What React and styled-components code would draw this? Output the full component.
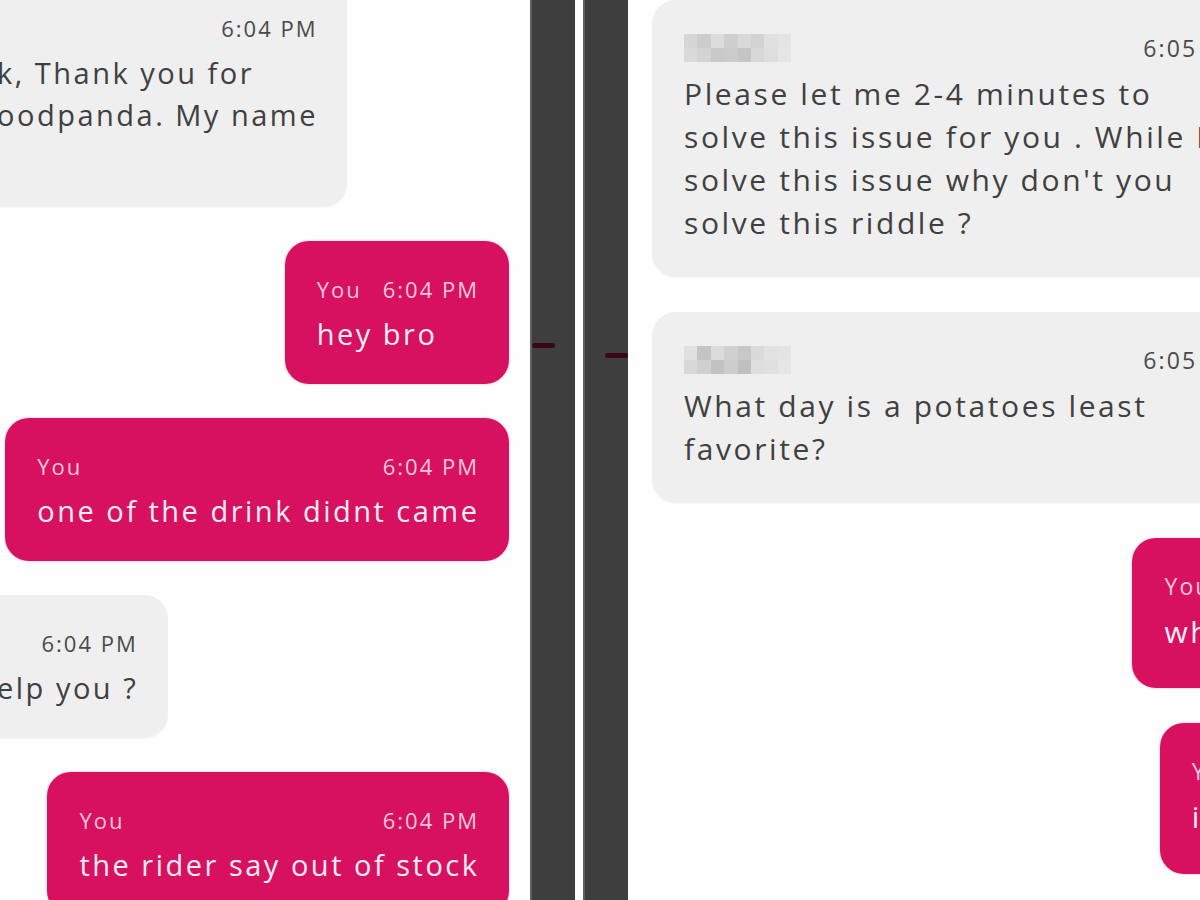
import React from "react";
import styled, { createGlobalStyle } from "styled-components";

const GlobalStyle = createGlobalStyle`
  html, body {
    margin: 0;
    padding: 0;
    background: #ffffff;
  }
  body {
    font-family: "Open Sans", "Noto Sans", sans-serif;
  }
`;

const Page = styled.div`
  display: flex;
  width: 1200px;
  height: 900px;
  overflow: hidden;
  background: #ffffff;
`;

const Panel = styled.div`
  flex: ${({ $width }) => ($width ? "none" : 1)};
  width: ${({ $width }) => ($width ? `${$width}px` : "auto")};
  overflow: hidden;
  background: #fefefe;
`;

const Column = styled.div`
  display: flex;
  flex-direction: column;
  gap: ${({ $gap }) => $gap}px;
  box-sizing: border-box;
  width: ${({ $width }) => $width}px;
  margin-left: ${({ $shift }) => $shift}px;
  margin-top: ${({ $top }) => $top}px;
  padding: ${({ $pad }) => $pad};
`;

const Bezel = styled.div`
  position: relative;
  flex: none;
  width: 43px;
  background: #3e3e3e;
  border-left: 2px solid #606060;
`;

const BezelGap = styled.div`
  flex: none;
  width: 8px;
  background: #ffffff;
`;

const Notch = styled.span`
  position: absolute;
  top: ${({ $top }) => $top}px;
  ${({ $right }) => ($right ? "right: 0;" : "left: 0;")}
  width: 23px;
  height: 5px;
  border-radius: 3px;
  background: #3a0716;
`;

const Bubble = styled.div`
  align-self: ${({ $out }) => ($out ? "flex-end" : "flex-start")};
  display: flex;
  flex-direction: column;
  gap: 9px;
  box-sizing: border-box;
  width: ${({ $w }) => ($w ? `${$w}px` : "auto")};
  padding: 33px 32px ${({ $bottom }) => $bottom}px;
  border-radius: 24px;
  background: ${({ $out }) => ($out ? "#d7105f" : "#efefef")};
  color: ${({ $out }) => ($out ? "#fdeef4" : "#404040")};
  box-shadow: ${({ $out }) =>
    $out ? "0 0 3px rgba(215, 16, 95, 0.25)" : "0 1px 2px rgba(0, 0, 0, 0.04)"};
`;

const Header = styled.div`
  display: flex;
  justify-content: space-between;
  align-items: center;
  gap: 21px;
  height: 30px;
  font-size: ${({ $big }) => ($big ? 23 : 22)}px;
  line-height: 30px;
  letter-spacing: ${({ $big }) => ($big ? 2.1 : 2)}px;
  white-space: nowrap;
`;

const Sender = styled.span`
  color: ${({ $out }) => ($out ? "#f7c8db" : "#555555")};
`;

const Time = styled.span`
  margin-right: -2px;
  color: ${({ $out }) => ($out ? "#f7c8db" : "#4a4a4a")};
`;

const Body = styled.div`
  font-size: ${({ $big }) => ($big ? 30 : 29)}px;
  line-height: ${({ $lh }) => $lh}px;
  letter-spacing: ${({ $big }) => ($big ? 2.6 : 2.5)}px;
  white-space: nowrap;
  margin-left: ${({ $indent }) => ($indent ? `${$indent}px` : 0)};
  margin-right: -2.5px;
`;

const Line = styled.div`
  min-height: 1em;
`;

const Blur = styled.div`
  display: grid;
  grid-template-columns: repeat(8, 1fr);
  grid-template-rows: repeat(2, 1fr);
  width: 107px;
  height: 28px;
`;

const Pixel = styled.span`
  background: ${({ $c }) => $c};
`;

const blurA = [
  "#d6d6d6", "#cdcdcd", "#dcdcdc", "#cfcfcf", "#d9d9d9", "#d2d2d2", "#e0e0e0", "#e4e4e4",
  "#dadada", "#d4d4d4", "#c9c9c9", "#cbcbcb", "#c6c6c6", "#d8d8d8", "#dedede", "#e6e6e6",
];
const blurB = [
  "#e0e0e0", "#c4c4c4", "#dcdcdc", "#d0d0d0", "#c8c8c8", "#dadada", "#e2e2e2", "#e4e4e4",
  "#d8d8d8", "#d0d0d0", "#c2c2c2", "#cdcdcd", "#c0c0c0", "#dedede", "#e0e0e0", "#e6e6e6",
];

const Name = ({ shades }) => (
  <Blur>
    {shades.map((c, i) => (
      <Pixel key={i} $c={c} />
    ))}
  </Blur>
);

const Message = ({ out, name, blur, time, lines, w, indent, big, lh = 42, bottom = 29 }) => (
  <Bubble $out={out} $w={w} $bottom={bottom}>
    <Header $big={big}>
      {blur ? <Name shades={blur} /> : <Sender $out={out}>{name}</Sender>}
      <Time $out={out}>{time}</Time>
    </Header>
    <Body $indent={indent} $lh={lh} $big={big}>
      {lines.map((l, i) => (
        <Line key={i}>{l}</Line>
      ))}
    </Body>
  </Bubble>
);

const App = () => {
  return (
    <>
      <GlobalStyle />
      <Page>
        <Panel $width={530}>
          <Column $width={590} $shift={-60} $top={-20} $pad="0 21px 0 20px" $gap={34}>
            <Message
              time="6:04 PM"
              name=""
              lines={["k, Thank you for", "oodpanda. My name", "\u00a0"]}
              indent={5}
            />
            <Message out name="You" time="6:04 PM" lines={["hey bro"]} />
            <Message out name="You" time="6:04 PM" lines={["one of the drink didnt came"]} />
            <Message time="6:04 PM" name="" lines={["elp you ?"]} indent={5} />
            <Message out name="You" time="6:04 PM" lines={["the rider say out of stock"]} />
          </Column>
        </Panel>
        <Bezel>
          <Notch $top={343} />
        </Bezel>
        <BezelGap />
        <Bezel>
          <Notch $top={353} $right />
        </Bezel>
        <Panel>
          <Column $width={807} $shift={0} $top={0} $pad="0 21px 0 24px" $gap={35}>
            <Message
              big
              blur={blurA}
              time="6:05 PM"
              w={622}
              lh={43}
              bottom={33}
              lines={[
                "Please let me 2-4 minutes to",
                "solve this issue for you . While I",
                "solve this issue why don't you",
                "solve this riddle ?",
              ]}
            />
            <Message
              big
              blur={blurB}
              time="6:05 PM"
              w={622}
              lh={43}
              bottom={33}
              lines={["What day is a potatoes least", "favorite?"]}
            />
            <Message big out name="You" time="6:05 PM" lh={43} bottom={35} lines={["what is that ?"]} />
            <Message big out name="You" time="6:06 PM" lh={43} bottom={36} lines={["i dont know"]} />
          </Column>
        </Panel>
      </Page>
    </>
  );
};

export default App;
